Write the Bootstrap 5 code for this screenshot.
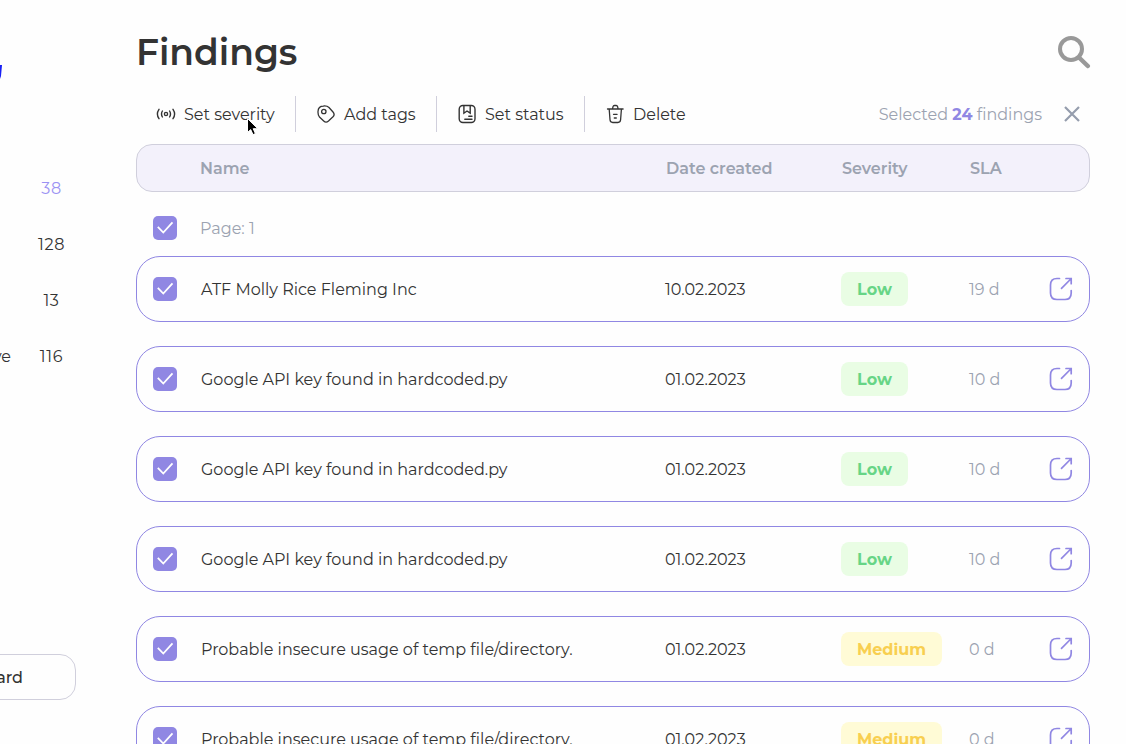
<!DOCTYPE html>
<html lang="en">
<head>
<meta charset="utf-8">
<meta name="viewport" content="width=device-width, initial-scale=1">
<title>Findings</title>
<link rel="stylesheet" href="https://cdn.jsdelivr.net/npm/bootstrap@5.3.0/dist/css/bootstrap.min.css">
<style>
  :root { --ink: #333; --muted: #9ca3b1; --violet: #9087e3; --line: #d0cfdc; }
  body { font-family: Montserrat, Inter, "Open Sans", sans-serif; font-size: 16px; line-height: 24px; color: var(--ink); background: #fefefe; height: 744px; overflow: hidden; white-space: nowrap; }
  svg { display: block; flex: none; }
  .sidebar { width: 136px; flex: none; height: 744px; padding-top: 64px; }
  .logo-tail { height: 16px; margin-bottom: 80px; }
  .side-item { height: 56px; }
  .side-label { width: 25px; padding-right: 14px; }
  .side-count { width: 53px; text-align: center; letter-spacing: .7px; }
  .side-button { width: 96px; height: 46px; margin: 270px 0 0 -20px; border: 1px solid var(--line); border-radius: 0 16px 16px 0; font-weight: 500; padding-right: 52px; }
  .sidebar span, .tool span, .selection, .grid-line > span { padding-top: 2px; }
  .page { width: 954px; height: 744px; }
  .page-head { height: 64px; margin-top: 20px; }
  .title { font-size: 36px; line-height: 64px; font-weight: 600; }
  .search { margin-right: -1px; }
  .toolbar { height: 36px; margin: 12px 0; }
  .tool { height: 36px; border-right: 1px solid var(--line); padding-left: 20px; }
  .tool:last-child { border: 0; }
  .tool svg { margin-right: 8px; stroke: var(--ink); fill: none; }
  .selection { color: var(--muted); margin-right: 22px; }
  .selection b { color: var(--violet); font-weight: 700; }
  .grid-line { display: grid; grid-template-columns: 63px 465px 176px 128px 80px 24px; align-items: center; }
  .list-head { height: 48px; background: #f3f1fb; border: 1px solid var(--line); border-radius: 16px; color: var(--muted); font-weight: 600; grid-template-columns: 63px 466px 176px 128px 80px; }
  .page-line { height: 24px; line-height: 22px; margin: 24px 0 16px; padding-left: 1px; color: var(--muted); }
  .finding { height: 66px; border: 1px solid var(--violet); border-radius: 24px; margin-bottom: 24px; }
  .finding .name { padding-left: 1px; }
  .check { margin-left: 16px; }
  .days { color: var(--muted); }
  .grid-line > .level { height: 34px; line-height: 34px; padding: 1px 0 0; border-radius: 8px; text-align: center; font-weight: 700; }
  .level-low { width: 67px; background: #e9fde4; color: #67d586; }
  .level-medium { width: 101px; background: #fffbd6; color: #f8cf50; }
  .cursor { position: absolute; left: 246px; top: 117px; }
</style>
</head>
<body>
<svg width="0" height="0" class="position-absolute">
  <symbol id="check" viewBox="0 0 24 24"><rect width="24" height="24" rx="5" fill="#9087e3"/><path d="M4.800 10.800 10.300 16.500 19.500 6.300" fill="none" stroke="#fff" stroke-width="1.800"/></symbol>
  <symbol id="open" viewBox="0 0 24 24"><g fill="none" stroke="#9087e3" stroke-width="1.700" stroke-linecap="round"><path d="M10.500 1.500H8Q1.500 1.500 1.500 8v8Q1.500 22.500 8 22.500h8Q22.200 22.500 22.200 16V13.500"/><path d="m12.500 11.300 9.300-9.300M17 1.500h5.200V6.700"/></g></symbol>
</svg>
<div class="d-flex">
  <aside class="sidebar">
    <div class="logo-tail"><svg width="3" height="16"><path d="M0 1H2L1 12 0 15Z" fill="#1820f5"/></svg></div>
    <div class="side-item d-flex align-items-center"><span class="side-label"></span><span class="side-count" style="color:#9b92f3">38</span></div>
    <div class="side-item d-flex align-items-center"><span class="side-label"></span><span class="side-count">128</span></div>
    <div class="side-item d-flex align-items-center"><span class="side-label"></span><span class="side-count">13</span></div>
    <div class="side-item d-flex align-items-center"><span class="side-label d-flex justify-content-end">ve</span><span class="side-count">116</span></div>
    <div class="side-button d-flex align-items-center justify-content-end"><span>ard</span></div>
  </aside>
  <main class="page">
    <header class="page-head d-flex justify-content-between align-items-center">
      <h1 class="title mb-0">Findings</h1>
      <svg class="search" width="34" height="34" viewBox="0 0 34 34" fill="none" stroke="#999" stroke-linecap="round"><circle cx="14" cy="14" r="11" stroke-width="4"/><path d="m22 22.500 8.800 8.500" stroke-width="4.500"/></svg>
    </header>
    <div class="toolbar d-flex align-items-center justify-content-between">
      <div class="d-flex">
        <div class="tool d-flex align-items-center" style="width:160px">
          <svg width="20" height="20" viewBox="0 0 20 20" stroke-width="1.400" stroke-linecap="round"><circle cx="10" cy="10" r="1.600"/><path d="M6.400 7q-1.800 3 0 6M13.600 7q1.800 3 0 6M3 5.300Q-.2 10 3 14.700M17 5.300q3.200 4.700 0 9.400"/></svg>
          <span>Set severity</span></div>
        <div class="tool d-flex align-items-center" style="width:141px">
          <svg width="20" height="20" viewBox="0 0 20 20" stroke-width="1.300"><path d="M2 7.500Q2.200 2.200 7.500 2q3.600-.3 5.500 1.500l4 4.500q2.200 2.500 0 4.800L12.500 17q-2.500 2.200-4.800 0L3.500 13Q1.800 11 2 7.500Z"/><circle cx="7.800" cy="7.500" r="2.200"/></svg>
          <span>Add tags</span></div>
        <div class="tool d-flex align-items-center" style="width:148px">
          <svg width="20" height="20" viewBox="0 0 20 20" stroke-width="1.400" stroke-linecap="round"><rect x="2.200" y="1.500" width="15.800" height="17" rx="3.700"/><path d="M6.900 1.800v7.400L10 7l3.200 2.200V1.800M11.800 12.300h3.200M7.800 15.300H15"/></svg>
          <span>Set status</span></div>
        <div class="tool d-flex align-items-center">
          <svg width="20" height="20" viewBox="0 0 20 20" stroke-width="1.300" stroke-linecap="round"><path d="M2.500 5h15.600M4.200 5.200l.8 10.600q.2 2.700 2.700 2.700h5.200q2.500 0 2.700-2.700l.8-10.600M7.500 4.800 8 2.700q.3-1.200 1.400-1.200h1.800q1.100 0 1.400 1.200l.5 2.100M8.500 10.300h3.600M9.300 14h2"/></svg>
          <span>Delete</span></div>
      </div>
      <div class="d-flex align-items-center">
        <span class="selection">Selected <b>24</b> findings</span>
        <svg width="16" height="16" viewBox="0 0 16 16" style="margin-right:10px" stroke="#959dad" stroke-width="2.200"><path d="m1 1 14 14M15 1 1 15"/></svg>
      </div>
    </div>
    <div class="list-head grid-line">
      <span></span><span>Name</span><span>Date created</span><span>Severity</span><span>SLA</span>
    </div>
    <div class="page-line grid-line"><svg class="check" width="24" height="24"><use href="#check"/></svg><span>Page: 1</span></div>
    <div class="finding grid-line"><svg class="check" width="24" height="24"><use href="#check"/></svg><span class="name">ATF Molly Rice Fleming Inc</span><span class="date">10.02.2023</span><span class="level level-low">Low</span><span class="days">19 d</span><svg width="24" height="24"><use href="#open"/></svg></div>
    <div class="finding grid-line"><svg class="check" width="24" height="24"><use href="#check"/></svg><span class="name">Google API key found in hardcoded.py</span><span class="date">01.02.2023</span><span class="level level-low">Low</span><span class="days">10 d</span><svg width="24" height="24"><use href="#open"/></svg></div>
    <div class="finding grid-line"><svg class="check" width="24" height="24"><use href="#check"/></svg><span class="name">Google API key found in hardcoded.py</span><span class="date">01.02.2023</span><span class="level level-low">Low</span><span class="days">10 d</span><svg width="24" height="24"><use href="#open"/></svg></div>
    <div class="finding grid-line"><svg class="check" width="24" height="24"><use href="#check"/></svg><span class="name">Google API key found in hardcoded.py</span><span class="date">01.02.2023</span><span class="level level-low">Low</span><span class="days">10 d</span><svg width="24" height="24"><use href="#open"/></svg></div>
    <div class="finding grid-line"><svg class="check" width="24" height="24"><use href="#check"/></svg><span class="name">Probable insecure usage of temp file/directory.</span><span class="date">01.02.2023</span><span class="level level-medium">Medium</span><span class="days">0 d</span><svg width="24" height="24"><use href="#open"/></svg></div>
    <div class="finding grid-line"><svg class="check" width="24" height="24"><use href="#check"/></svg><span class="name">Probable insecure usage of temp file/directory.</span><span class="date">01.02.2023</span><span class="level level-medium">Medium</span><span class="days">0 d</span><svg width="24" height="24"><use href="#open"/></svg></div>
  </main>
</div>
<svg class="cursor" width="14" height="20" viewBox="0 0 14 20"><path d="M1.500 1.500v14l3.200-2.900 2.300 5 2.400-1-2.200-4.900h4.600Z" fill="#000" stroke="#fff" stroke-width="1"/></svg>
<script src="https://cdn.jsdelivr.net/npm/bootstrap@5.3.0/dist/js/bootstrap.bundle.min.js"></script>
</body>
</html>
